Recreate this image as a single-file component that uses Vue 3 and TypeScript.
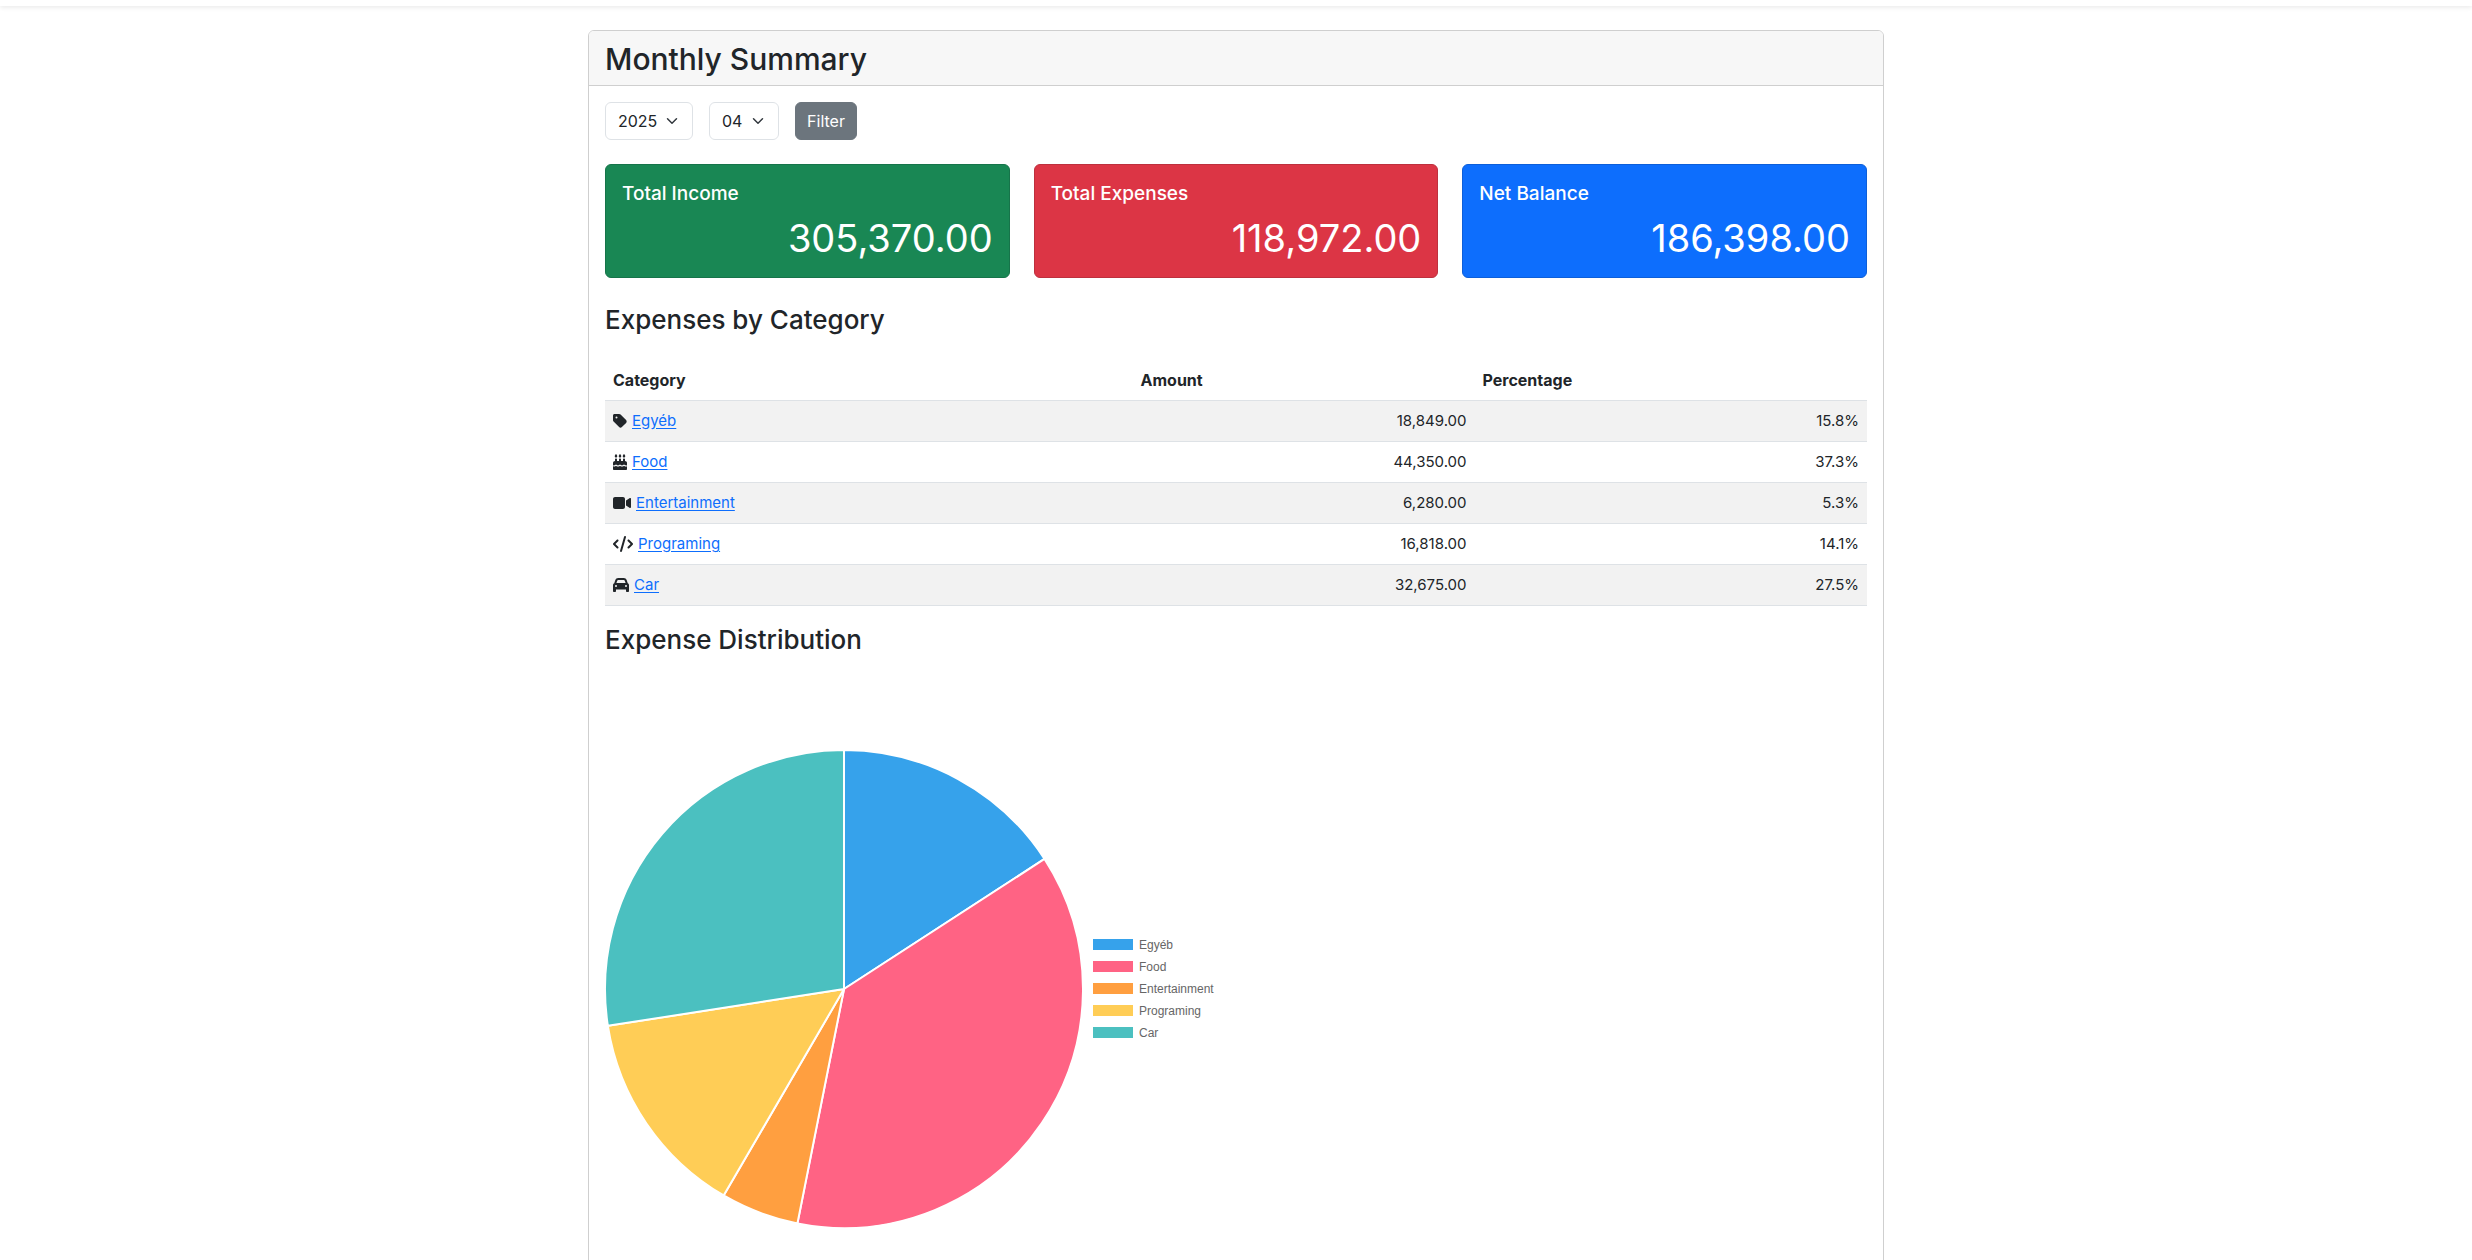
<script setup lang="ts">
import { computed, ref } from 'vue'

interface Category {
  name: string
  amount: number
  color: string
  iconWidth: number
  icon: string
}

const categories: Category[] = [
  {
    name: 'Egyéb',
    amount: 18849,
    color: '#36a2eb',
    iconWidth: 448,
    icon: 'M0 80V229.5c0 17 6.7 33.3 18.7 45.3l176 176c25 25 65.5 25 90.5 0L418.7 317.3c25-25 25-65.5 0-90.5l-176-176c-12-12-28.3-18.7-45.3-18.7H48C21.5 32 0 53.5 0 80zm112 32a32 32 0 1 1 0 64 32 32 0 1 1 0-64z',
  },
  {
    name: 'Food',
    amount: 44350,
    color: '#ff6384',
    iconWidth: 448,
    icon: 'M86.4 5.5L61.8 47.6C58 54.1 56 61.6 56 69.2V72c0 22.1 17.9 40 40 40s40-17.9 40-40V69.2c0-7.6-2-15-5.8-21.6L105.6 5.5C103.6 2.1 100 0 96 0s-7.6 2.1-9.6 5.5zm128 0L189.8 47.6c-3.8 6.5-5.8 14-5.8 21.6V72c0 22.1 17.9 40 40 40s40-17.9 40-40V69.2c0-7.6-2-15-5.8-21.6L233.6 5.5C231.6 2.1 228 0 224 0s-7.6 2.1-9.6 5.5zM317.8 47.6c-3.8 6.5-5.8 14-5.8 21.6V72c0 22.1 17.9 40 40 40s40-17.9 40-40V69.2c0-7.6-2-15-5.8-21.6L361.6 5.5C359.6 2.1 356 0 352 0s-7.6 2.1-9.6 5.5L317.8 47.6zM128 176c0-17.7-14.3-32-32-32s-32 14.3-32 32v48c-35.3 0-64 28.7-64 64v71c8.3 5.2 18.1 9 28.8 9c13.5 0 27.2-6.1 38.4-13.4c5.4-3.5 9.9-7.1 13-9.7c1.5-1.3 2.7-2.4 3.5-3.1c.4-.4 .7-.6 .8-.8l.1-.1c3.1-3.2 7.4-4.9 11.9-4.8s8.6 2.1 11.6 5.4l.1 .1c.1 .1 .4 .4 .7 .7c.7 .7 1.7 1.7 3.1 3c2.8 2.6 6.8 6.1 11.8 9.5c10.2 7.1 23 13.1 36.3 13.1s26.1-6 36.3-13.1c5-3.5 9-6.9 11.8-9.5c1.4-1.3 2.4-2.3 3.1-3c.3-.3 .6-.6 .7-.7l.1-.1c3-3.5 7.4-5.4 12-5.4s9 2 12 5.4l.1 .1c.1 .1 .4 .4 .7 .7c.7 .7 1.7 1.7 3.1 3c2.8 2.6 6.8 6.1 11.8 9.5c10.2 7.1 23 13.1 36.3 13.1s26.1-6 36.3-13.1c5-3.5 9-6.9 11.8-9.5c1.4-1.3 2.4-2.3 3.1-3c.3-.3 .6-.6 .7-.7l.1-.1c2.9-3.4 7.1-5.3 11.6-5.4s8.7 1.6 11.9 4.8l.1 .1c.2 .2 .4 .4 .8 .8c.8 .7 1.9 1.8 3.5 3.1c3.1 2.6 7.5 6.2 13 9.7c11.2 7.3 24.9 13.4 38.4 13.4c10.7 0 20.5-3.9 28.8-9V288c0-35.3-28.7-64-64-64V176c0-17.7-14.3-32-32-32s-32 14.3-32 32v48H256V176c0-17.7-14.3-32-32-32s-32 14.3-32 32v48H128V176zM448 394.6c-8.5 3.3-18.2 5.4-28.8 5.4c-22.5 0-42.4-9.9-55.8-18.6c-4.1-2.7-7.8-5.4-10.9-7.8c-2.8 2.4-6.1 5-9.8 7.5C329.8 390 310.6 400 288 400s-41.8-10-54.6-18.9c-3.5-2.4-6.7-4.9-9.4-7.2c-2.7 2.3-5.9 4.7-9.4 7.2C201.8 390 182.6 400 160 400s-41.8-10-54.6-18.9c-3.7-2.6-7-5.2-9.8-7.5c-3.1 2.4-6.8 5.1-10.9 7.8C71.2 390.1 51.3 400 28.8 400c-10.6 0-20.3-2.2-28.8-5.4V480c0 17.7 14.3 32 32 32H416c17.7 0 32-14.3 32-32V394.6z',
  },
  {
    name: 'Entertainment',
    amount: 6280,
    color: '#ff9f40',
    iconWidth: 576,
    icon: 'M0 128C0 92.7 28.7 64 64 64H320c35.3 0 64 28.7 64 64V384c0 35.3-28.7 64-64 64H64c-35.3 0-64-28.7-64-64V128zM559.1 99.8c10.4 5.6 16.9 16.4 16.9 28.2V384c0 11.8-6.5 22.6-16.9 28.2s-23 5-32.9-1.6l-96-64L416 337.1V320 192 174.9l14.2-9.5 96-64c9.8-6.5 22.4-7.2 32.9-1.6z',
  },
  {
    name: 'Programing',
    amount: 16818,
    color: '#ffcd56',
    iconWidth: 640,
    icon: 'M392.8 1.2c-17-4.9-34.7 5-39.6 22l-128 448c-4.9 17 5 34.7 22 39.6s34.7-5 39.6-22l128-448c4.9-17-5-34.7-22-39.6zm80.6 120.1c-12.5 12.5-12.5 32.8 0 45.3L562.7 256l-89.4 89.4c-12.5 12.5-12.5 32.8 0 45.3s32.8 12.5 45.3 0l112-112c12.5-12.5 12.5-32.8 0-45.3l-112-112c-12.5-12.5-32.8-12.5-45.3 0zm-306.7 0c-12.5-12.5-32.8-12.5-45.3 0l-112 112c-12.5 12.5-12.5 32.8 0 45.3l112 112c12.5 12.5 32.8 12.5 45.3 0s12.5-32.8 0-45.3L77.3 256l89.4-89.4c12.5-12.5 12.5-32.8 0-45.3z',
  },
  {
    name: 'Car',
    amount: 32675,
    color: '#4bc0c0',
    iconWidth: 512,
    icon: 'M135.2 117.4L109.1 192H402.9l-26.1-74.6C372.3 104.6 360.2 96 346.6 96H165.4c-13.6 0-25.7 8.6-30.2 21.4zM39.6 196.8L74.8 96.3C88.3 57.8 124.6 32 165.4 32H346.6c40.8 0 77.1 25.8 90.6 64.3l35.2 100.5c23.2 9.6 39.6 32.5 39.6 59.2V400v48c0 17.7-14.3 32-32 32H448c-17.7 0-32-14.3-32-32V400H96v48c0 17.7-14.3 32-32 32H32c-17.7 0-32-14.3-32-32V400 256c0-26.7 16.4-49.6 39.6-59.2zM128 288a32 32 0 1 0 -64 0 32 32 0 1 0 64 0zm288 32a32 32 0 1 0 0-64 32 32 0 1 0 0 64z',
  },
]

const income = 305370
const year = ref('2025')
const month = ref('04')
const years = ['2023', '2024', '2025']
const months = Array.from({ length: 12 }, (_, i) => String(i + 1).padStart(2, '0'))

const total = computed(() => categories.reduce((sum, c) => sum + c.amount, 0))

const tiles = computed(() => [
  { label: 'Total Income', value: income, tone: 'success' },
  { label: 'Total Expenses', value: total.value, tone: 'danger' },
  { label: 'Net Balance', value: income - total.value, tone: 'primary' },
])

const money = (n: number): string =>
  n.toLocaleString('en-US', { minimumFractionDigits: 2, maximumFractionDigits: 2 })
const percent = (n: number): string => ((n / total.value) * 100).toFixed(1) + '%'

const radius = 239
const slices = computed(() => {
  let start = 0
  return categories.map((c) => {
    const end = start + (c.amount / total.value) * Math.PI * 2
    const point = (a: number) =>
      `${(radius + radius * Math.sin(a)).toFixed(2)} ${(radius - radius * Math.cos(a)).toFixed(2)}`
    const large = end - start > Math.PI ? 1 : 0
    const d = `M${radius} ${radius}L${point(start)}A${radius} ${radius} 0 ${large} 1 ${point(end)}Z`
    start = end
    return { name: c.name, color: c.color, d }
  })
})
</script>

<template>
  <div class="page">
    <header class="topbar"></header>
    <main class="container">
      <section class="card">
        <div class="card-header">
          <h1>Monthly Summary</h1>
        </div>
        <div class="card-body">
          <form class="filters" @submit.prevent>
            <select v-model="year" class="select year" aria-label="Year">
              <option v-for="y in years" :key="y" :value="y">{{ y }}</option>
            </select>
            <select v-model="month" class="select month" aria-label="Month">
              <option v-for="m in months" :key="m" :value="m">{{ m }}</option>
            </select>
            <button type="submit" class="button">Filter</button>
          </form>

          <div class="tiles">
            <article v-for="t in tiles" :key="t.label" class="tile" :class="t.tone">
              <h2>{{ t.label }}</h2>
              <p>{{ money(t.value) }}</p>
            </article>
          </div>

          <h3>Expenses by Category</h3>
          <table class="table">
            <colgroup>
              <col class="col-category" />
              <col class="col-amount" />
              <col />
            </colgroup>
            <thead>
              <tr>
                <th scope="col">Category</th>
                <th scope="col">Amount</th>
                <th scope="col">Percentage</th>
              </tr>
            </thead>
            <tbody>
              <tr v-for="c in categories" :key="c.name">
                <td>
                  <div class="category">
                    <svg
                      class="icon"
                      :width="c.iconWidth / 32"
                      height="16"
                      :viewBox="`0 0 ${c.iconWidth} 512`"
                      aria-hidden="true"
                    >
                      <path :d="c.icon" />
                    </svg>
                    <a href="#">{{ c.name }}</a>
                  </div>
                </td>
                <td class="number">{{ money(c.amount) }}</td>
                <td class="number">{{ percent(c.amount) }}</td>
              </tr>
            </tbody>
          </table>

          <h3 class="chart-title">Expense Distribution</h3>
          <div class="chart">
            <svg class="pie" viewBox="0 0 478 478" role="img" aria-label="Expense Distribution">
              <path v-for="s in slices" :key="s.name" :d="s.d" :fill="s.color" />
            </svg>
            <ul class="legend">
              <li v-for="c in categories" :key="c.name">
                <span class="swatch" :style="{ background: c.color }"></span>{{ c.name }}
              </li>
            </ul>
          </div>
        </div>
      </section>
    </main>
  </div>
</template>

<style>
body {
  margin: 0;
  background: #fff;
}
</style>

<style scoped>
.page,
.page * {
  box-sizing: border-box;
}
.page {
  height: 100vh;
  overflow-y: auto;
  scrollbar-width: none;
  font-family: Inter, 'Liberation Sans', sans-serif;
  font-size: 16px;
  line-height: 24px;
  color: #212529;
}
.topbar {
  height: 6px;
  box-shadow: 0 2px 4px rgba(0, 0, 0, 0.075);
}
.container {
  max-width: 1320px;
  margin: 24px auto 0;
  padding: 0 12px;
}
.card {
  border: 1px solid #cfcfcf;
  border-radius: 6px;
  overflow: hidden;
}
.card-header {
  padding: 8px 16px;
  background: #f7f7f7;
  border-bottom: 1px solid #cfcfcf;
}
h1,
h2,
h3,
p {
  margin: 0;
  padding-top: 2px;
}
h1 {
  font-size: 30px;
  line-height: 36px;
  font-weight: 500;
}
.card-body {
  padding: 16px;
}
.filters {
  display: flex;
  gap: 16px;
}
.select,
.button {
  height: 38px;
  border-radius: 6px;
  font-family: inherit;
  font-size: 16px;
  line-height: 24px;
}
.select {
  appearance: none;
  padding: 6px 0 6px 12px;
  color: #212529;
  background: #fff
    url("data:image/svg+xml,%3csvg xmlns='http://www.w3.org/2000/svg' viewBox='0 0 16 16'%3e%3cpath fill='none' stroke='%23343a40' stroke-linecap='round' stroke-linejoin='round' stroke-width='2' d='m2 5 6 6 6-6'/%3e%3c/svg%3e")
    no-repeat right 12px center / 16px 12px;
  border: 1px solid #dee2e6;
}
.year {
  width: 88px;
}
.month {
  width: 70px;
}
.button {
  width: 62px;
  padding: 0;
  color: #fff;
  background: #6c757d;
  border: 1px solid #6c757d;
}
.tiles {
  display: grid;
  grid-template-columns: repeat(3, 1fr);
  gap: 24px;
  margin: 24px 0;
}
.tile {
  padding: 16px;
  color: #fff;
  border: 1px solid;
  border-radius: 6px;
}
.success {
  background: #198754;
  border-color: #16744a;
}
.danger {
  background: #dc3545;
  border-color: #bd303e;
}
.primary {
  background: #0d6efd;
  border-color: #0d5fd9;
}
.tile h2 {
  margin-bottom: 8px;
  font-size: 19px;
  line-height: 22px;
  font-weight: 500;
}
.tile p {
  font-size: 38px;
  line-height: 46px;
  font-weight: 400;
  text-align: right;
}
h3 {
  font-size: 26px;
  line-height: 32px;
  font-weight: 500;
}
.table {
  width: 100%;
  margin: 24px 0 16px;
  table-layout: fixed;
  border-collapse: separate;
  border-spacing: 0;
}
.col-category {
  width: 41.8%;
}
.col-amount {
  width: 27.1%;
}
th,
td {
  padding: 8px;
  border-bottom: 1px solid #dee2e6;
  text-align: left;
}
th {
  font-weight: 700;
}
td {
  font-size: 15px;
}
tbody tr:nth-child(odd) {
  background: #f2f2f2;
}
.table .number {
  text-align: right;
}
.category {
  display: flex;
  align-items: center;
  gap: 5px;
}
.icon {
  fill: currentColor;
}
a {
  color: #0d6efd;
  text-decoration: underline;
  text-underline-offset: 2px;
}
.chart-title {
  margin-bottom: 8px;
}
.chart {
  display: flex;
  align-items: center;
  gap: 10px;
  height: 650px;
}
.pie {
  width: 478px;
  height: 478px;
  stroke: #fff;
  stroke-width: 2;
  stroke-linejoin: round;
}
.legend {
  display: flex;
  flex-direction: column;
  gap: 10px;
  margin: 0;
  padding: 0;
  list-style: none;
  color: #666;
  font-family: 'Liberation Sans', Arial, sans-serif;
  font-size: 12px;
  line-height: 12px;
}
.legend li {
  display: flex;
  align-items: start;
  gap: 6px;
}
.swatch {
  width: 40px;
  height: 11px;
}
</style>
